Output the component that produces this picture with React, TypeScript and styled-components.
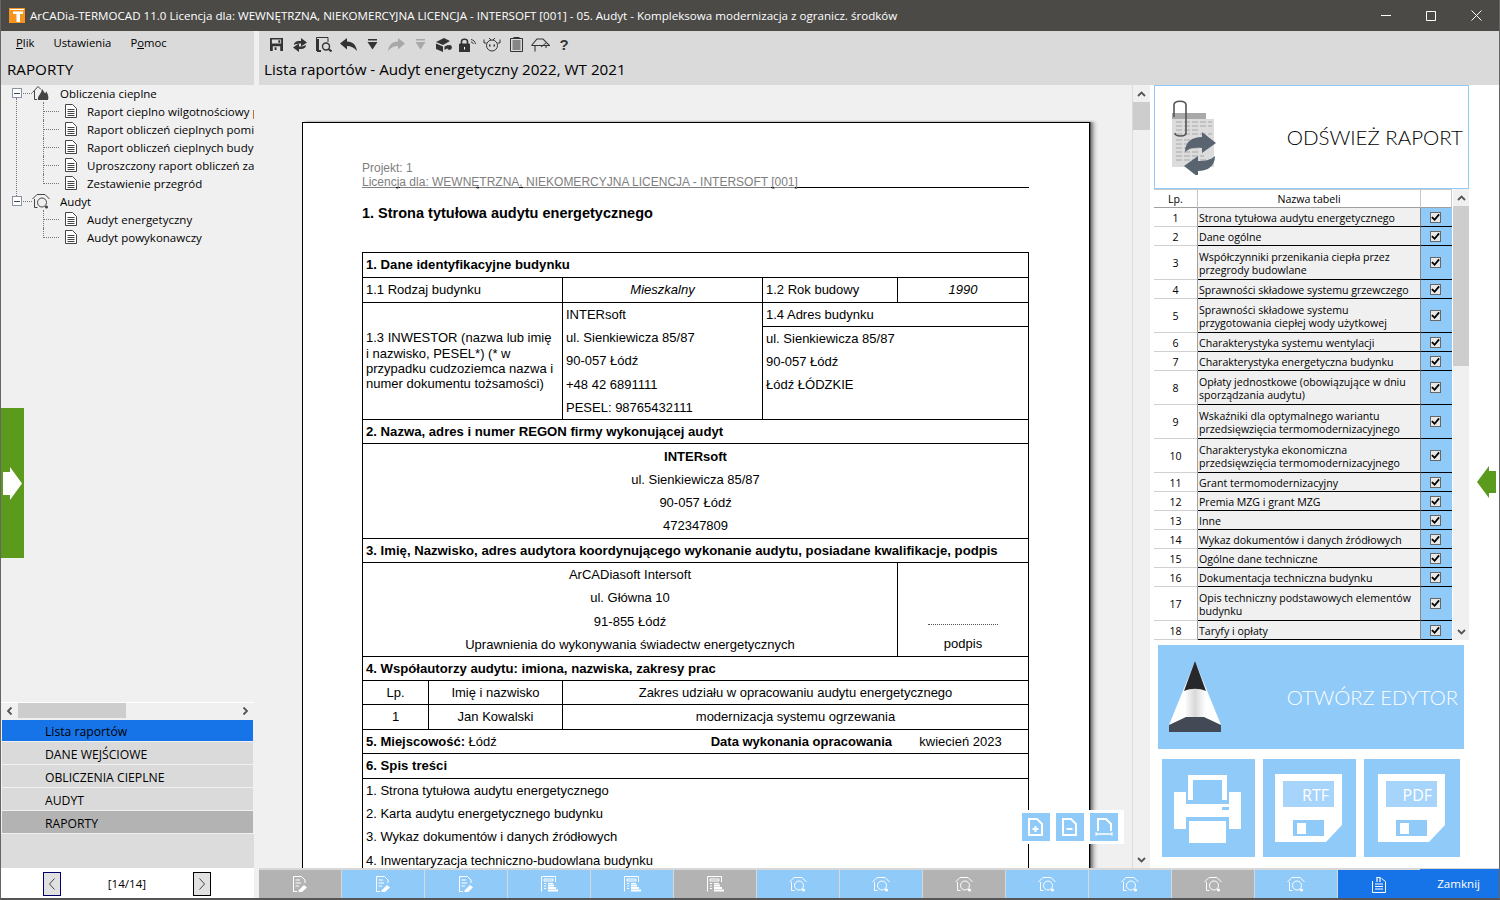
import React from 'react'
import styled, { createGlobalStyle } from 'styled-components'

const BLUE = '#90caf9'
const DEEP = '#1774e8'
const GREY = '#b3b3b3'
const UI = '"Open Sans", "Noto Sans", sans-serif'
const LIGHT = 'Lato, "Open Sans", sans-serif'
const DOC = '"Liberation Sans", Arial, sans-serif'

const GlobalStyle = createGlobalStyle`
    html, body { margin: 0; padding: 0; background: #fff; }
    * { box-sizing: border-box; }
`

const DocIcon = () => (
    <svg width="12" height="14" viewBox="0 0 12 14" fill="none" stroke="#444">
        <path d="M.5 .5H7.5L11.5 4.5V13.5H.5Z" fill="#fff" />
        <path d="M2.5 5.5H9.5M2.5 7.5H9.5M2.5 9.5H9.5M2.5 11.5H9.5" />
    </svg>
)

const HouseFlame = () => (
    <svg width="18" height="16" viewBox="0 0 18 16" fill="none" stroke="#444">
        <path d="M.5 7.5L6 1.5L9 4.5M2.5 6V14.5H5" />
        <path d="M6 15C5 11 9 10 10 4C12 6 12 8 13 8C14 8 14 7 14 6C16 9 17 12 16 15Z" fill="#444" stroke="none" />
    </svg>
)

const HouseLens = ({ color = '#444', size = 18 }: { color?: string; size?: number }) => (
    <svg width={size} height={size} viewBox="0 0 18 18" fill="none" stroke={color}>
        <path d="M.5 7L5 2.5H13L17.5 7M2.5 7V15.5H5.5" />
        <circle cx="10" cy="10.5" r="4.5" />
        <circle cx="14.5" cy="15" r="1.6" fill={color} stroke="none" />
    </svg>
)

const TabDocPen = () => (
    <svg width="16" height="18" viewBox="0 0 16 18" fill="none" stroke="#fff">
        <path d="M1.5 17V1.5H9.5L13 5V8" />
        <path d="M3.5 5H8M3.5 8H9M3.5 11H7M1.5 16.5H5" />
        <path d="M6 16L12 10L15 12.5L10 17H7Z" fill="#fff" stroke="none" />
    </svg>
)

const TabTable = () => (
    <svg width="17" height="16" viewBox="0 0 17 16" fill="none" stroke="#fff">
        <path d="M.5 15.5V.5H14.5V6" />
        <path d="M3 3H12V5H3ZM3 7.5H5M7 7.5H12M3 10H5M3 12.5H5" />
        <path d="M7 9.5H13M7 12H15M7 14.5H17" strokeWidth="2" />
    </svg>
)

const TabClipDoc = () => (
    <svg width="14" height="17" viewBox="0 0 14 17" fill="none" stroke="#fff">
        <path d="M.5 5V16.5H13.5V5.5L9.5 2.5M3 8H11M3 10.5H11M3 13H11" />
        <path d="M5 6V1.5H8V6" strokeWidth="1.2" />
    </svg>
)

const SaveIcon = () => (
    <svg width="13" height="13" viewBox="0 0 14 14">
        <path fill="#333" d="M0 0H14V14H0Z" />
        <path fill="#ddd" d="M2 1.5H12V6H2ZM3 9H11V14H3Z" />
        <path fill="#333" d="M9 2.5H11V5H9ZM5 10H7V13H5Z" />
    </svg>
)

const SyncIcon = () => (
    <svg width="14" height="14" viewBox="0 0 14 14" fill="#333">
        <path d="M1 7C1 4 4 2.5 8 3V0L14 4.5L8 8.5V5.5C5 5.5 3 6 1 7Z" />
        <path d="M13 7C13 10 10 11.5 6 11V14L0 9.5L6 5.5V8.5C9 8.5 11 8 13 7Z" />
    </svg>
)

const PreviewIcon = () => (
    <svg width="16" height="15" viewBox="0 0 16 15" fill="none" stroke="#333">
        <path d="M.5 14V.5H12V5" />
        <path d="M2 2V14H5" strokeWidth="2" />
        <circle cx="10" cy="9.5" r="3.5" strokeWidth="1.4" />
        <path d="M12.5 12L15.5 14.5" strokeWidth="2" />
    </svg>
)

const ArrowSvg = styled.svg<{ $flip?: boolean }>`
    transform: ${(p) => (p.$flip ? 'scaleX(-1)' : 'none')};
`

const BackIcon = ({ color = '#333', flip = false }: { color?: string; flip?: boolean }) => (
    <ArrowSvg width="17" height="13" viewBox="0 0 17 13" fill={color} $flip={flip}>
        <path d="M0 5.5L7 0V3.5C13 3.5 16 7 17 13C14 9.5 11 8 7 8V11.5Z" />
    </ArrowSvg>
)

const DropIcon = ({ color = '#333' }: { color?: string }) => (
    <svg width="11" height="11" viewBox="0 0 11 11" fill={color}>
        <path d="M1 0H10V1.5H1ZM.5 3H10.5L5.5 10.5Z" />
    </svg>
)

const BookIcon = () => (
    <svg width="16" height="14" viewBox="0 0 16 14" fill="#333">
        <path d="M0 4L8 0L14 3L7 7ZM0 5.5L7 8.5V14L0 11ZM8.5 8.5L12 7V10L8.5 12Z" />
        <circle cx="13.5" cy="9.5" r="2.4" />
    </svg>
)

const LockIcon = () => (
    <svg width="18" height="14" viewBox="0 0 18 14" fill="none" stroke="#333">
        <path d="M2.5 6V3.5C2.5 .5 8.5 .5 8.5 3.5V6" strokeWidth="1.6" />
        <path d="M.5 6H10.5V14H.5Z" fill="#333" />
        <path d="M5 9H6V11.5H5Z" fill="#fff" stroke="none" />
        <path d="M12 1.5C14.5 2 16 3.5 16.5 6M12 4C13.5 4.3 14 5 14.3 6" />
    </svg>
)

const RobotIcon = () => (
    <svg width="18" height="15" viewBox="0 0 18 15" fill="none" stroke="#333">
        <circle cx="9" cy="8.5" r="5.5" />
        <path d="M1 2.5V6H3.5M17 2.5V6H14.5M6 1L8 3M12 1L10 3" />
        <path d="M6 8.5H7.5M10.5 8.5H12" strokeWidth="2" />
    </svg>
)

const ListIcon = () => (
    <svg width="13" height="15" viewBox="0 0 13 15" fill="none" stroke="#333">
        <path d="M.5 1.5H12.5V14.5H.5Z" />
        <path d="M2.5 4H10.5M2.5 6H10.5M2.5 8H10.5M2.5 10H10.5M2.5 12H10.5M3.5 .5H9.5" />
    </svg>
)

const RoofIcon = () => (
    <svg width="19" height="15" viewBox="0 0 19 15" fill="none" stroke="#333">
        <path d="M.5 8.5L6 2H12L18.5 8.5H.5M4 8.5V14.5M15 8.5V11" strokeWidth="1.1" />
        <path d="M10 10L15 6" />
    </svg>
)

const ReportIcon = () => (
    <svg width="50" height="76" viewBox="0 0 50 76">
        <path d="M4 14H38V20H46V68H4Z" fill="#dcdcdc" />
        <path
            d="M8 23H44M8 27H44M8 31H30M8 35H44M8 41H26M8 45H26M8 49H30M8 53H30M8 57H36M8 61H44"
            stroke="#a8a8a8"
            strokeDasharray="6 2"
        />
        <path d="M4 14H38V20H4Z" fill="#a9a9a9" />
        <path
            d="M7 34C7 38 18 38 18 34V6C18 1 6 1 6 6V18"
            fill="none"
            stroke="#555"
            strokeWidth="1.6"
        />
        <path d="M17 53C17 43 24 38 34 38V33L48 44L34 54V49C26 48 21 49 17 53Z" fill="#596470" />
        <path d="M47 57C47 67 40 72 30 72V78L16 67L30 57V62C38 62 43 61 47 57Z" fill="#596470" />
    </svg>
)

const PencilIcon = () => (
    <svg width="52" height="72" viewBox="0 0 52 72">
        <defs>
            <linearGradient id="shaft" x1="0" x2="1" y1="0" y2="0">
                <stop offset="0.3" stopColor="#fff" />
                <stop offset="0.5" stopColor="#d8d8d8" />
                <stop offset="0.7" stopColor="#fff" />
            </linearGradient>
        </defs>
        <path d="M26 0L52 64H0Z" fill="url(#shaft)" />
        <path d="M26 0L37 30C30 27 22 27 15 30Z" fill="#26282c" />
        <path d="M0 64L17 56H35L52 64V71H0Z" fill="#444a55" />
    </svg>
)

const PrinterIcon = () => (
    <svg width="93" height="98" viewBox="0 0 93 98">
        <path fill="#fff" fillRule="evenodd" d="M26 16H65V41H60V21H31V41H26Z" />
        <path fill="#fff" d="M12 33H24V45H67V33H79V70H67V58H24V70H12Z" />
        <path fill={BLUE} d="M60 48H67V51H60Z" />
        <path fill="#fff" d="M27 62H64V84H27Z" />
    </svg>
)

const FloppyIcon = ({ label, x }: { label: string; x: number }) => (
    <svg width="96" height="98" viewBox="0 0 96 98">
        <g transform={`translate(${x} 0)`}>
            <path fill="#fff" d="M12 15H79V66L63 83H12Z" />
            <path fill="#a6d4fb" d="M20 22H71V48H20Z" />
            <text x="66" y="42" fill="#fff" fontSize="16" fontFamily={UI} textAnchor="end">
                {label}
            </text>
            <path fill={BLUE} d="M30 61H61V77H30Z" />
            <path fill="#fff" d="M34 64H43V75H34Z" />
        </g>
    </svg>
)

const AppLogoIcon = () => (
    <svg width="16" height="15" viewBox="0 0 16 15">
        <path fill="#f7941e" d="M0 0H16V15H0Z" />
        <path fill="#fff" d="M1 1H15V2H1ZM4 3.5H14V6H11V14H7.5V6H4Z" />
    </svg>
)

const ZoomIn = () => (
    <svg width="18" height="18" viewBox="0 0 18 18" fill="none" stroke="#fff" strokeWidth="2">
        <path d="M2 1H10L15 6V17H2Z" />
        <path d="M5.5 11H11.5M8.5 8V14" />
    </svg>
)

const ZoomOut = () => (
    <svg width="18" height="18" viewBox="0 0 18 18" fill="none" stroke="#fff" strokeWidth="2">
        <path d="M2 1H10L15 6V17H2Z" />
        <path d="M5.5 11H11.5" />
    </svg>
)

const ZoomFit = () => (
    <svg width="18" height="18" viewBox="0 0 18 18" fill="none" stroke="#fff" strokeWidth="2">
        <path d="M3 13V1H11L16 6V13" />
        <path d="M1 16H17" strokeWidth="1.5" />
        <path d="M1 14V18M17 14V18" strokeWidth="1" />
    </svg>
)

const CheckMark = () => (
    <svg width="10" height="9" viewBox="0 0 10 9" fill="none" stroke="#000" strokeWidth="2">
        <path d="M1 4L4 7L9 1" />
    </svg>
)

const turns = { up: 0, right: 90, down: 180, left: 270 }

const ChevronSvg = styled.svg<{ $dir: keyof typeof turns }>`
    transform: rotate(${(p) => turns[p.$dir]}deg);
`

const Chevron = ({ dir }: { dir: keyof typeof turns }) => (
    <ChevronSvg width="9" height="6" viewBox="0 0 9 6" fill="none" stroke="#555" strokeWidth="1.8" $dir={dir}>
        <path d="M1 5L4.5 1.5L8 5" />
    </ChevronSvg>
)

const PagerArrow = ({ back }: { back?: boolean }) => (
    <ArrowSvg width="6" height="12" viewBox="0 0 6 12" fill="none" stroke="#444" $flip={!back}>
        <path d="M5.5 .5L.5 6L5.5 11.5" />
    </ArrowSvg>
)

const Window = styled.div`
    position: relative;
    width: 1500px;
    height: 900px;
    display: flex;
    flex-direction: column;
    overflow: hidden;
    background: #f0f0f0;
    border-left: 1px solid #666;
    border-right: 1px solid #666;
    border-bottom: 2px solid #555;
    font-family: ${UI};
    color: #000;
`

const TitleBar = styled.div`
    flex: 0 0 31px;
    display: flex;
    align-items: center;
    background: #4b4a47;
    color: #fff;
    font-size: 11.58px;
    padding-left: 8px;
`

const AppLogo = styled.div`
    display: flex;
    margin-right: 5px;
`

const TitleText = styled.span`
    flex: 1;
    white-space: nowrap;
`

const WinButton = styled.div`
    width: 45px;
    height: 31px;
    display: flex;
    align-items: center;
    justify-content: center;
    &:not(:last-child) {
        padding-right: 2px;
    }
`

const Body = styled.div`
    flex: 1;
    display: flex;
    min-height: 0;
`

const LeftPane = styled.div`
    flex: 0 0 258px;
    display: flex;
    flex-direction: column;
`

const LeftHead = styled.div`
    flex: 0 0 54px;
    width: 253px;
    background: #dadada;
    padding-left: 6px;
`

const MenuBar = styled.div`
    display: flex;
    gap: 19px;
    padding: 4px 0 0 9px;
    font-size: 11.3px;
    line-height: 16px;
    height: 27px;
`

const PaneTitle = styled.div`
    font-size: 15.2px;
    line-height: 22px;
    white-space: nowrap;
`

const Tree = styled.div`
    position: relative;
    flex: 1;
    width: 253px;
    overflow: hidden;
    margin-top: -1px;
    &::before {
        content: '';
        position: absolute;
        left: 15px;
        top: 14px;
        height: 98px;
        border-left: 1px dotted #777;
    }
`

const TreeRow = styled.div<{ $child?: boolean }>`
    position: relative;
    height: 18px;
    display: flex;
    align-items: center;
    white-space: nowrap;
    font-size: 11.5px;
    padding-left: ${(p) => (p.$child ? '42px' : '11px')};
`

const Expander = styled.div`
    flex: none;
    width: 10px;
    height: 10px;
    margin-right: 1px;
    border: 1px solid #8a93a5;
    background: #fff;
    display: flex;
    align-items: center;
    justify-content: center;
    z-index: 1;
    &::before {
        content: '';
        width: 6px;
        height: 1px;
        background: #445;
    }
`

const Stub = styled.div<{ $w: number }>`
    flex: none;
    width: ${(p) => p.$w}px;
    border-top: 1px dotted #777;
`

const Elbow = styled.div<{ $last?: boolean }>`
    flex: none;
    align-self: flex-start;
    width: 21px;
    height: ${(p) => (p.$last ? '10px' : '18px')};
    border-left: 1px dotted #777;
    position: relative;
    &::after {
        content: '';
        position: absolute;
        left: 0;
        top: 9px;
        width: 15px;
        border-top: 1px dotted #777;
    }
`

const NodeIcon = styled.span<{ $w: number; $mr: number }>`
    flex: none;
    width: ${(p) => p.$w}px;
    margin-right: ${(p) => p.$mr}px;
    display: flex;
    justify-content: center;
`

const HScroll = styled.div`
    flex: 0 0 18px;
    width: 253px;
    display: flex;
    align-items: flex-start;
    background: #f0f0f0;
    border-top: 1px solid #fff;
`

const ScrollEnd = styled.div`
    flex: 0 0 17px;
    height: 15px;
    display: flex;
    align-items: center;
    justify-content: center;
`

const HThumb = styled.div`
    width: 108px;
    height: 15px;
    background: #cdcdcd;
`

const HRest = styled.div`
    flex: 1;
`

const Nav = styled.div`
    width: 253px;
    padding-left: 1px;
    display: flex;
    flex-direction: column;
    background: #f0f0f0;
`

const NavItem = styled.div<{ $bg: string; $h: number }>`
    height: ${(p) => p.$h}px;
    width: 251px;
    margin-bottom: 1px;
    padding: 2px 0 0 43px;
    display: flex;
    align-items: center;
    background: ${(p) => p.$bg};
    font-size: 12.2px;
`

const NavFill = styled.div`
    flex: 0 0 34px;
    width: 253px;
    background: #dcdcdc;
`

const Pager = styled.div`
    flex: 0 0 30px;
    width: 253px;
    background: #fff;
    display: flex;
    align-items: center;
    font-size: 11.6px;
    padding: 1px 0 0 42px;
`

const PagerBtn = styled.div<{ $active?: boolean }>`
    width: 18px;
    height: 24px;
    background: #e1e1e1;
    border: 1px solid ${(p) => (p.$active ? '#00006e' : '#000')};
    display: flex;
    align-items: center;
    justify-content: center;
`

const PagerLabel = styled.div`
    width: 132px;
    text-align: center;
`

const MainPane = styled.div`
    flex: 1;
    min-width: 0;
    display: flex;
    flex-direction: column;
`

const MainHead = styled.div`
    flex: 0 0 54px;
    background: #dadada;
    padding-left: 5px;
`

const Toolbar = styled.div`
    height: 27px;
    display: flex;
    align-items: center;
`

const ToolSlot = styled.div`
    width: 24px;
    display: flex;
    justify-content: center;
    align-items: center;
`

const Help = styled.span`
    font: bold 15px ${DOC};
    color: #333;
`

const Work = styled.div`
    flex: 1;
    min-height: 0;
    display: flex;
`

const Center = styled.div`
    position: relative;
    flex: 0 0 891px;
    display: flex;
    min-width: 0;
`

const DocArea = styled.div`
    flex: 1;
    overflow: hidden;
    padding: 37px 0 0 43px;
    border-right: 1px solid #dcdcdc;
`

const Page = styled.div`
    width: 788px;
    height: 900px;
    background: #fff;
    border: 1px solid #000;
    box-shadow: 1px 0 0 #555, 3px 0 2px #888, 6px 0 3px #ccc;
    padding: 39px 0 0 59px;
    font-family: ${DOC};
`

const PageHeader = styled.div`
    width: 667px;
    border-bottom: 1px solid #000;
    color: #808080;
    font-size: 12px;
    line-height: 13.5px;
    height: 26px;
    white-space: nowrap;
`

const PageTitle = styled.div`
    margin: 17px 0 31px;
    font-size: 14.5px;
    line-height: 16px;
    font-weight: bold;
`

const Report = styled.table`
    width: 666px;
    table-layout: fixed;
    border-collapse: collapse;
    font-size: 13px;
    color: #000;
`

const Tr = styled.tr<{ $h: number }>`
    height: ${(p) => p.$h}px;
`

const Td = styled.td<{ $align?: string; $bold?: boolean; $italic?: boolean; $top?: boolean }>`
    border: 1px solid #000;
    padding: 0 3px;
    line-height: 15.4px;
    text-align: ${(p) => p.$align || 'left'};
    font-weight: ${(p) => (p.$bold ? 'bold' : 'normal')};
    font-size: ${(p) => (p.$bold ? '13.15px' : '13px')};
    font-style: ${(p) => (p.$italic ? 'italic' : 'normal')};
    vertical-align: ${(p) => (p.$top ? 'top' : 'middle')};
`

const InvestorText = styled.div`
    max-width: 190px;
`

const Line = styled.div`
    height: 23.2px;
    line-height: 23.2px;
    white-space: nowrap;
`

const SplitCell = styled.div`
    display: flex;
    font-weight: normal;
`

const SplitLabel = styled.div`
    flex: 1;
    font-weight: bold;
    text-align: right;
`

const SplitDate = styled.div`
    flex: 0 0 133px;
    text-align: center;
    padding-left: 4px;
`

const Strong = styled.b`
    font-weight: bold;
`

const SignDots = styled.div`
    margin: 61px auto 11px;
    width: 70px;
    border-top: 1px dotted #555;
`

const VScroll = styled.div`
    flex: 0 0 17px;
    display: flex;
    flex-direction: column;
    align-items: stretch;
`

const VEnd = styled.div`
    flex: 0 0 17px;
    display: flex;
    align-items: center;
    justify-content: center;
`

const VThumb = styled.div<{ $h: number }>`
    height: ${(p) => p.$h}px;
    background: #cdcdcd;
`

const VRest = styled.div`
    flex: 1;
`

const ZoomPanel = styled.div`
    position: absolute;
    left: 757px;
    bottom: 24px;
    display: flex;
    gap: 6px;
    padding: 3px 6px;
    background: #fff;
`

const ZoomBtn = styled.div`
    width: 28px;
    height: 28px;
    background: ${BLUE};
    display: flex;
    align-items: center;
    justify-content: center;
`

const RightPane = styled.div`
    flex: 1;
    background: #fff;
    padding-left: 4px;
    display: flex;
    flex-direction: column;
`

const RefreshBtn = styled.div`
    flex: 0 0 104px;
    width: 315px;
    border: 1px solid ${BLUE};
    display: flex;
    align-items: center;
    justify-content: space-between;
    padding: 0 5px 0 13px;
    font-family: ${LIGHT};
    font-size: 20.5px;
    font-weight: 300;
    color: #000;
`

const TableWrap = styled.div`
    flex: 0 0 451px;
    width: 315px;
    display: flex;
    overflow: hidden;
`

const TableArea = styled.div`
    flex: 0 0 298px;
    overflow: hidden;
`

const Head = styled.div`
    height: 19px;
    display: grid;
    grid-template-columns: 44px 223px 31px;
    font-size: 10.6px;
    border-top: 1px solid #c8c8c8;
`

const HeadCell = styled.div`
    display: flex;
    align-items: center;
    justify-content: center;
    border-right: 1px solid #c8c8c8;
    border-left: 1px solid #c8c8c8;
    margin-left: -1px;
    border-bottom: 1px solid #a0a0a0;
`

const DataRow = styled.div<{ $h: number }>`
    height: ${(p) => p.$h}px;
    display: grid;
    grid-template-columns: 44px 223px 31px;
    font-size: 10.6px;
    line-height: 13px;
`

const LpCell = styled.div`
    display: flex;
    align-items: center;
    justify-content: center;
    padding-top: 2px;
    border-bottom: 1px solid #d0d0d0;
    border-right: 1px solid #a0a0a0;
`

const NameCell = styled.div`
    display: flex;
    align-items: center;
    padding: 2px 0 0 1px;
    background: #f0f0f0;
    border-bottom: 1px solid #000;
    border-right: 1px solid #888;
`

const CheckCell = styled.div`
    display: flex;
    align-items: center;
    justify-content: center;
    padding-right: 2px;
    background: ${BLUE};
    border-bottom: 1px solid #000;
`

const CheckBox = styled.div`
    width: 11px;
    height: 11px;
    background: #e8e8e8;
    border: 1px solid #666;
    display: flex;
    align-items: center;
    justify-content: center;
`

const TableScroll = styled.div`
    flex: 0 0 16px;
    margin-left: 1px;
    display: flex;
    flex-direction: column;
    background: #f0f0f0;
`

const EditorBtn = styled.div`
    flex: 0 0 104px;
    width: 306px;
    margin: 5px 0 0 4px;
    background: ${BLUE};
    color: #fff;
    display: flex;
    align-items: center;
    justify-content: space-between;
    padding: 0 6px 0 11px;
    font-family: ${LIGHT};
    font-size: 20.3px;
    font-weight: 300;
`

const ExportRow = styled.div`
    display: flex;
    gap: 8px;
    margin: 10px 0 0 8px;
`

const ExportBtn = styled.div<{ $w: number }>`
    width: ${(p) => p.$w}px;
    height: 98px;
    background: ${BLUE};
    overflow: hidden;
`

const Tabs = styled.div`
    flex: 0 0 30px;
    display: flex;
    background: #d8d8d8;
    padding-top: 2px;
`

const Tab = styled.div<{ $bg: string }>`
    flex: 0 0 82px;
    margin-right: 1px;
    background: ${(p) => p.$bg};
    display: flex;
    align-items: center;
    justify-content: center;
`

const CloseTab = styled.div`
    flex: 1;
    margin-top: -1px;
    margin-left: -1px;
    background: ${DEEP};
    color: #fff;
    font-size: 11.6px;
    display: flex;
    align-items: center;
    justify-content: flex-end;
    padding-right: 19px;
`

const LeftHandle = styled.div`
    position: absolute;
    left: 0;
    top: 408px;
    width: 23px;
    height: 150px;
    background: #5c9a1d;
    display: flex;
    align-items: center;
    padding-left: 2px;
`

const RightHandle = styled.div`
    position: absolute;
    right: 3px;
    top: 466px;
`

const tableRows = [
    ['Strona tytułowa audytu energetycznego', 19],
    ['Dane ogólne', 19],
    ['Współczynniki przenikania ciepła przez przegrody budowlane', 34],
    ['Sprawności składowe systemu grzewczego', 19],
    ['Sprawności składowe systemu przygotowania ciepłej wody użytkowej', 34],
    ['Charakterystyka systemu wentylacji', 19],
    ['Charakterystyka energetyczna budynku', 19],
    ['Opłaty jednostkowe (obowiązujące w dniu sporządzania audytu)', 34],
    ['Wskaźniki dla optymalnego wariantu przedsięwzięcia termomodernizacyjnego', 34],
    ['Charakterystyka ekonomiczna przedsięwzięcia termomodernizacyjnego', 34],
    ['Grant termomodernizacyjny', 19],
    ['Premia MZG i grant MZG', 19],
    ['Inne', 19],
    ['Wykaz dokumentów i danych źródłowych', 19],
    ['Ogólne dane techniczne', 19],
    ['Dokumentacja techniczna budynku', 19],
    ['Opis techniczny podstawowych elementów budynku', 34],
    ['Taryfy i opłaty', 19],
] as [string, number][]

const tabs = [
    { icon: <TabDocPen />, bg: GREY },
    { icon: <TabDocPen />, bg: BLUE },
    { icon: <TabDocPen />, bg: BLUE },
    { icon: <TabTable />, bg: BLUE },
    { icon: <TabTable />, bg: BLUE },
    { icon: <TabTable />, bg: GREY },
    { icon: <HouseLens color="#fff" />, bg: BLUE },
    { icon: <HouseLens color="#fff" />, bg: BLUE },
    { icon: <HouseLens color="#fff" />, bg: GREY },
    { icon: <HouseLens color="#fff" />, bg: BLUE },
    { icon: <HouseLens color="#fff" />, bg: BLUE },
    { icon: <HouseLens color="#fff" />, bg: GREY },
    { icon: <HouseLens color="#fff" />, bg: BLUE },
    { icon: <TabClipDoc />, bg: DEEP },
]

const toolIcons = [
    <SaveIcon />,
    <SyncIcon />,
    <PreviewIcon />,
    <BackIcon />,
    <DropIcon />,
    <BackIcon color="#a8a8a8" flip />,
    <DropIcon color="#a8a8a8" />,
    <BookIcon />,
    <LockIcon />,
    <RobotIcon />,
    <ListIcon />,
    <RoofIcon />,
    <Help>?</Help>,
]

const treeChildren1 = [
    'Raport cieplno wilgotnościowy przegród',
    'Raport obliczeń cieplnych pomieszczeń',
    'Raport obliczeń cieplnych budynku',
    'Uproszczony raport obliczeń zapotrzebowania',
    'Zestawienie przegród',
]
const treeChildren2 = ['Audyt energetyczny', 'Audyt powykonawczy']

const ChildRows = ({ items }: { items: string[] }) => (
    <>
        {items.map((name, i) => (
            <TreeRow $child key={name}>
                <Elbow $last={i === items.length - 1} />
                <NodeIcon $w={13} $mr={10}>
                    <DocIcon />
                </NodeIcon>
                {name}
            </TreeRow>
        ))}
    </>
)

const App = () => {
    return (
        <>
            <GlobalStyle />
            <Window>
                <TitleBar>
                    <AppLogo><AppLogoIcon /></AppLogo>
                    <TitleText>
                        ArCADia-TERMOCAD 11.0 Licencja dla: WEWNĘTRZNA, NIEKOMERCYJNA LICENCJA - INTERSOFT [001] - 05. Audyt - Kompleksowa modernizacja z ogranicz. środków
                    </TitleText>
                    <WinButton>
                        <svg width="10" height="1"><path d="M0 .5H10" stroke="#fff" /></svg>
                    </WinButton>
                    <WinButton>
                        <svg width="10" height="10"><path d="M.5 .5H9.5V9.5H.5Z" stroke="#fff" fill="none" /></svg>
                    </WinButton>
                    <WinButton>
                        <svg width="11" height="11"><path d="M.5 .5L10.5 10.5M10.5 .5L.5 10.5" stroke="#fff" fill="none" /></svg>
                    </WinButton>
                </TitleBar>
                <Body>
                    <LeftPane>
                        <LeftHead>
                            <MenuBar>
                                <span><u>P</u>lik</span>
                                <span>Ustawienia</span>
                                <span>P<u>o</u>moc</span>
                            </MenuBar>
                            <PaneTitle>RAPORTY</PaneTitle>
                        </LeftHead>
                        <Tree>
                            <TreeRow>
                                <Expander />
                                <Stub $w={9} />
                                <NodeIcon $w={18} $mr={10}>
                                    <HouseFlame />
                                </NodeIcon>
                                Obliczenia cieplne
                            </TreeRow>
                            <ChildRows items={treeChildren1} />
                            <TreeRow>
                                <Expander />
                                <Stub $w={9} />
                                <NodeIcon $w={18} $mr={10}>
                                    <HouseLens />
                                </NodeIcon>
                                Audyt
                            </TreeRow>
                            <ChildRows items={treeChildren2} />
                        </Tree>
                        <HScroll>
                            <ScrollEnd><Chevron dir="left" /></ScrollEnd>
                            <HThumb />
                            <HRest />
                            <ScrollEnd><Chevron dir="right" /></ScrollEnd>
                        </HScroll>
                        <Nav>
                            <NavItem $bg={DEEP} $h={21}>Lista raportów</NavItem>
                            <NavItem $bg="#dadada" $h={22}>DANE WEJŚCIOWE</NavItem>
                            <NavItem $bg="#dadada" $h={22}>OBLICZENIA CIEPLNE</NavItem>
                            <NavItem $bg="#dadada" $h={22}>AUDYT</NavItem>
                            <NavItem $bg={GREY} $h={22}>RAPORTY</NavItem>
                        </Nav>
                        <NavFill />
                        <Pager>
                            <PagerBtn $active><PagerArrow back /></PagerBtn>
                            <PagerLabel>[14/14]</PagerLabel>
                            <PagerBtn><PagerArrow /></PagerBtn>
                        </Pager>
                    </LeftPane>
                    <MainPane>
                        <MainHead>
                            <Toolbar>
                                {toolIcons.map((icon, i) => (
                                    <ToolSlot key={i}>{icon}</ToolSlot>
                                ))}
                            </Toolbar>
                            <PaneTitle>Lista raportów - Audyt energetyczny 2022, WT 2021</PaneTitle>
                        </MainHead>
                        <Work>
                            <Center>
                                <DocArea>
                                    <Page>
                                        <PageHeader>
                                            Projekt: 1
                                            <br />
                                            <u>Licencja dla: WEWNĘTRZNA, NIEKOMERCYJNA LICENCJA - INTERSOFT [001]</u>
                                        </PageHeader>
                                        <PageTitle>1. Strona tytułowa audytu energetycznego</PageTitle>
                                        <Report>
                                            <colgroup>
                                                <col width="66" />
                                                <col width="134" />
                                                <col width="200" />
                                                <col width="135" />
                                                <col width="131" />
                                            </colgroup>
                                            <tbody>
                                                <Tr $h={25}><Td colSpan={5} $bold>1. Dane identyfikacyjne budynku</Td></Tr>
                                                <Tr $h={25}>
                                                    <Td colSpan={2}>1.1 Rodzaj budynku</Td>
                                                    <Td $align="center" $italic>Mieszkalny</Td>
                                                    <Td>1.2 Rok budowy</Td>
                                                    <Td $align="center" $italic>1990</Td>
                                                </Tr>
                                                <Tr $h={24}>
                                                    <Td colSpan={2} rowSpan={2}>
                                                        <InvestorText>
                                                            1.3 INWESTOR (nazwa lub imię i nazwisko, PESEL*) (* w przypadku cudzoziemca nazwa i numer dokumentu tożsamości)
                                                        </InvestorText>
                                                    </Td>
                                                    <Td rowSpan={2}>
                                                        <Line>INTERsoft</Line>
                                                        <Line>ul. Sienkiewicza 85/87</Line>
                                                        <Line>90-057 Łódź</Line>
                                                        <Line>+48 42 6891111</Line>
                                                        <Line>PESEL: 98765432111</Line>
                                                    </Td>
                                                    <Td colSpan={2}>1.4 Adres budynku</Td>
                                                </Tr>
                                                <Tr $h={93}>
                                                    <Td colSpan={2} $top>
                                                        <Line>ul. Sienkiewicza 85/87</Line>
                                                        <Line>90-057 Łódź</Line>
                                                        <Line>Łódź ŁÓDZKIE</Line>
                                                    </Td>
                                                </Tr>
                                                <Tr $h={24}><Td colSpan={5} $bold>2. Nazwa, adres i numer REGON firmy wykonującej audyt</Td></Tr>
                                                <Tr $h={95}>
                                                    <Td colSpan={5} $align="center">
                                                        <Line><Strong>INTERsoft</Strong></Line>
                                                        <Line>ul. Sienkiewicza 85/87</Line>
                                                        <Line>90-057 Łódź</Line>
                                                        <Line>472347809</Line>
                                                    </Td>
                                                </Tr>
                                                <Tr $h={24}><Td colSpan={5} $bold>3. Imię, Nazwisko, adres audytora koordynującego wykonanie audytu, posiadane kwalifikacje, podpis</Td></Tr>
                                                <Tr $h={94}>
                                                    <Td colSpan={4} $align="center">
                                                        <Line>ArCADiasoft Intersoft</Line>
                                                        <Line>ul. Główna 10</Line>
                                                        <Line>91-855 Łódź</Line>
                                                        <Line>Uprawnienia do wykonywania świadectw energetycznych</Line>
                                                    </Td>
                                                    <Td $align="center" $top>
                                                        <SignDots />
                                                        podpis
                                                    </Td>
                                                </Tr>
                                                <Tr $h={24}><Td colSpan={5} $bold>4. Współautorzy audytu: imiona, nazwiska, zakresy prac</Td></Tr>
                                                <Tr $h={24}>
                                                    <Td $align="center">Lp.</Td>
                                                    <Td $align="center">Imię i nazwisko</Td>
                                                    <Td colSpan={3} $align="center">Zakres udziału w opracowaniu audytu energetycznego</Td>
                                                </Tr>
                                                <Tr $h={25}>
                                                    <Td $align="center">1</Td>
                                                    <Td $align="center">Jan Kowalski</Td>
                                                    <Td colSpan={3} $align="center">modernizacja systemu ogrzewania</Td>
                                                </Tr>
                                                <Tr $h={24}>
                                                    <Td colSpan={5}>
                                                        <SplitCell>
                                                            <div><Strong>5. Miejscowość:</Strong> Łódź</div>
                                                            <SplitLabel>Data wykonania opracowania</SplitLabel>
                                                            <SplitDate>kwiecień 2023</SplitDate>
                                                        </SplitCell>
                                                    </Td>
                                                </Tr>
                                                <Tr $h={25}><Td colSpan={5} $bold>6. Spis treści</Td></Tr>
                                                <Tr $h={95}>
                                                    <Td colSpan={5} $top>
                                                        <Line>1. Strona tytułowa audytu energetycznego</Line>
                                                        <Line>2. Karta audytu energetycznego budynku</Line>
                                                        <Line>3. Wykaz dokumentów i danych źródłowych</Line>
                                                        <Line>4. Inwentaryzacja techniczno-budowlana budynku</Line>
                                                    </Td>
                                                </Tr>
                                            </tbody>
                                        </Report>
                                    </Page>
                                </DocArea>
                                <VScroll>
                                    <VEnd><Chevron dir="up" /></VEnd>
                                    <VThumb $h={28} />
                                    <VRest />
                                    <VEnd><Chevron dir="down" /></VEnd>
                                </VScroll>
                                <ZoomPanel>
                                    <ZoomBtn><ZoomIn /></ZoomBtn>
                                    <ZoomBtn><ZoomOut /></ZoomBtn>
                                    <ZoomBtn><ZoomFit /></ZoomBtn>
                                </ZoomPanel>
                            </Center>
                            <RightPane>
                                <RefreshBtn>
                                    <ReportIcon />
                                    <span>ODŚWIEŻ RAPORT</span>
                                </RefreshBtn>
                                <TableWrap>
                                    <TableArea>
                                        <Head>
                                            <HeadCell>Lp.</HeadCell>
                                            <HeadCell>Nazwa tabeli</HeadCell>
                                            <HeadCell />
                                        </Head>
                                        {tableRows.map(([name, h], i) => (
                                            <DataRow $h={h} key={name}>
                                                <LpCell>{i + 1}</LpCell>
                                                <NameCell>{name}</NameCell>
                                                <CheckCell>
                                                    <CheckBox><CheckMark /></CheckBox>
                                                </CheckCell>
                                            </DataRow>
                                        ))}
                                    </TableArea>
                                    <TableScroll>
                                        <VEnd><Chevron dir="up" /></VEnd>
                                        <VThumb $h={160} />
                                        <VRest />
                                        <VEnd><Chevron dir="down" /></VEnd>
                                    </TableScroll>
                                </TableWrap>
                                <EditorBtn>
                                    <PencilIcon />
                                    <span>OTWÓRZ EDYTOR</span>
                                </EditorBtn>
                                <ExportRow>
                                    <ExportBtn $w={93}><PrinterIcon /></ExportBtn>
                                    <ExportBtn $w={93}><FloppyIcon label="RTF" x={0} /></ExportBtn>
                                    <ExportBtn $w={96}><FloppyIcon label="PDF" x={2} /></ExportBtn>
                                </ExportRow>
                            </RightPane>
                        </Work>
                        <Tabs>
                            {tabs.map((t, i) => (
                                <Tab $bg={t.bg} key={i}>{t.icon}</Tab>
                            ))}
                            <CloseTab>Zamknij</CloseTab>
                        </Tabs>
                    </MainPane>
                </Body>
                <LeftHandle>
                    <svg width="19" height="33" viewBox="0 0 19 33"><path d="M0 5H7V0L19 16.5L7 33V28H0Z" fill="#fff" /></svg>
                </LeftHandle>
                <RightHandle>
                    <svg width="19" height="32" viewBox="0 0 19 32"><path d="M19 5H12V0L0 16L12 32V27H19Z" fill="#5c9a1d" /></svg>
                </RightHandle>
            </Window>
        </>
    )
}

export default App
